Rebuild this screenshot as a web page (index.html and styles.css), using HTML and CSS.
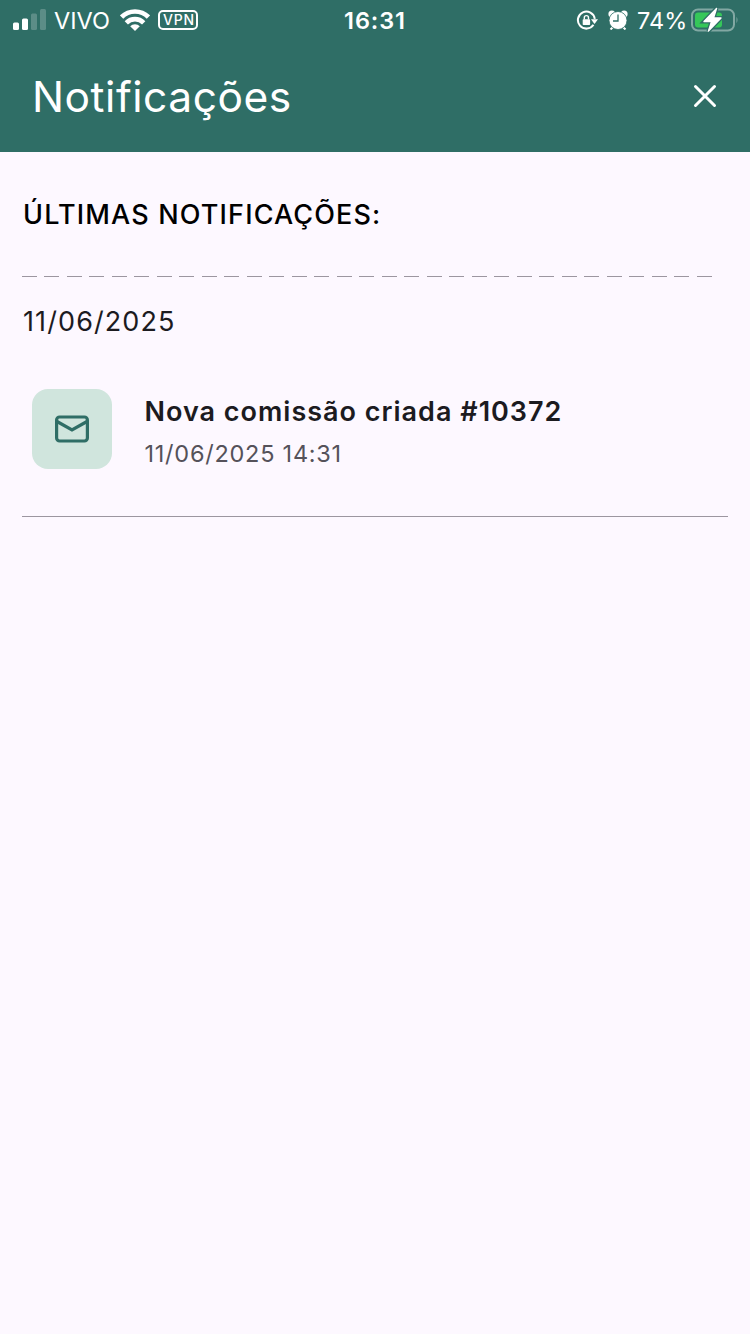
FILE: index.html
```html
<!DOCTYPE html>
<html lang="pt-BR">
<head>
    <meta charset="UTF-8">
    <title>Notificações</title>
    <link rel="stylesheet" href="styles.css">
</head>
<body>
    <header class="topo">
        <div class="status">
            <div class="status-esq">
                <svg class="sinal" width="33" height="22" viewBox="0 0 33 22">
                    <rect x="0" y="13.5" width="6" height="7.5" rx="1.5" fill="#fff"/>
                    <rect x="9" y="9.5" width="6" height="11.5" rx="1.5" fill="#fff"/>
                    <rect x="18" y="4.5" width="6" height="16.5" rx="1.5" fill="#fff" opacity=".22"/>
                    <rect x="27" y="0" width="6" height="21" rx="1.5" fill="#fff" opacity=".22"/>
                </svg>
                <span class="operadora">VIVO</span>
                <svg class="wifi" width="30" height="22" viewBox="0 0 30 22" fill="none" stroke="#fff" stroke-width="4.6">
                    <path d="M1.6 8a19 19 0 0 1 26.8 0"/>
                    <path d="M6.3 13.8a12.2 12.2 0 0 1 17.4 0"/>
                    <path d="M15 22l-4.8-4.7a6.7 6.7 0 0 1 9.6 0z" fill="#fff" stroke="none"/>
                </svg>
                <span class="vpn">VPN</span>
            </div>
            <div class="hora">16:31</div>
            <div class="status-dir">
                <svg class="trava" width="22" height="20" viewBox="0 0 22 20" fill="none" stroke="#fff">
                    <path d="M17.5 14.8a8.5 8.5 0 1 1 1.3-6" stroke-width="2"/>
                    <path d="M15 9.3h7l-3.5 4.7z" fill="#fff" stroke="none"/>
                    <rect x="6.7" y="9.2" width="7.4" height="5.8" rx=".8" fill="#fff" stroke="none"/>
                    <path d="M8.3 9.5V7.7a2.1 2.1 0 0 1 4.2 0v1.8" stroke-width="1.4"/>
                </svg>
                <svg class="alarme" width="20" height="20" viewBox="0 0 20 20">
                    <path d="M5 17l-2.5 2.5M15 17l2.5 2.5" stroke="#fff" stroke-width="2"/>
                    <circle cx="3.9" cy="3.9" r="3.5" fill="#fff"/>
                    <circle cx="16.1" cy="3.9" r="3.5" fill="#fff"/>
                    <circle cx="10" cy="10.5" r="9" fill="#fff" stroke="#2f6e66" stroke-width=".8"/>
                    <path d="M10 4.5V11H5" fill="none" stroke="#2f6e66" stroke-width="1.3"/>
                </svg>
                <span class="carga">74%</span>
                <svg class="bateria" width="48" height="26" viewBox="0 0 48 26">
                    <rect x="1" y="2.5" width="42" height="21" rx="6" fill="none" stroke="#82a8a3" stroke-width="2"/>
                    <rect x="4" y="5.5" width="27" height="15" rx="3" fill="#35c759"/>
                    <path d="M45.5 9.8q2 3.2 0 6.4z" fill="#82a8a3"/>
                    <path d="M25.5 1.5L13 14.6h7.5l-3.1 9.5L30 11h-7.5z" fill="#fff" stroke="#2f6e66" stroke-width="4" paint-order="stroke"/>
                    <path d="M25.5 1.5L13 14.6h7.5l-3.1 9.5L30 11h-7.5z" fill="#fff" stroke="#fff" stroke-width="1.4" stroke-linejoin="round"/>
                </svg>
            </div>
        </div>
        <div class="barra">
            <h1 class="titulo">Notificações</h1>
            <svg class="fechar" width="24" height="24" viewBox="0 0 24 24">
                <path d="M2.5 2.5l19 19M21.5 2.5l-19 19" stroke="#fff" stroke-width="3" stroke-linecap="round"/>
            </svg>
        </div>
    </header>

    <main class="conteudo">
        <h2 class="subtitulo">ÚLTIMAS NOTIFICAÇÕES:</h2>
        <div class="tracejado"></div>
        <p class="data">11/06/2025</p>
        <div class="item">
            <div class="icone">
                <svg width="36" height="28" viewBox="0 0 36 28" fill="none" stroke="#2f6e66" stroke-width="3.2">
                    <rect x="2.6" y="2" width="30.8" height="24" rx="3"/>
                    <path d="M3 6.500L18 15l15-8.500"/>
                </svg>
            </div>
            <div class="texto">
                <p class="nome">Nova comissão criada #10372</p>
                <p class="quando">11/06/2025 14:31</p>
            </div>
        </div>
    </main>
</body>
</html>
```

FILE: styles.css
```css
*{
    box-sizing: border-box;
    margin: 0;
    padding: 0;
}
body{
    background-color: #fdf8ff;
    font-family: Inter, "Liberation Sans", sans-serif;
    min-height: 1334px;
}
svg{
    display: block;
    flex-shrink: 0;
}
.topo{
    background-color: #2f6e66;
    color: #fff;
    height: 152px;
}
.status{
    display: flex;
    align-items: center;
    height: 40px;
    padding: 0 11px 0 13px;
}
.status-esq, .status-dir{
    display: flex;
    align-items: center;
    flex: 1 1 0;
}
.status-dir{
    justify-content: flex-end;
}
.operadora{
    font-size: 23.5px;
    line-height: 40px;
    margin-left: 8px;
    padding-top: 1px;
    width: 57px;
    white-space: nowrap;
}
.wifi{
    margin-left: 9px;
}
.vpn{
    border: 2px solid #fff;
    border-radius: 5px;
    font-size: 14px;
    font-weight: 500;
    letter-spacing: 0.8px;
    line-height: 16px;
    height: 20px;
    width: 40px;
    padding-left: 3px;
    margin-left: 8px;
}
.hora{
    font-size: 23.5px;
    font-weight: 600;
    letter-spacing: 0.9px;
    line-height: 40px;
    padding-top: 1px;
    margin-right: 2px;
}
.alarme{
    margin-left: 10px;
}
.carga{
    font-size: 23.5px;
    line-height: 40px;
    margin-left: 9px;
    padding-top: 1px;
    width: 49px;
    white-space: nowrap;
}
.bateria{
    margin-left: 5px;
}
.barra{
    display: flex;
    align-items: center;
    justify-content: space-between;
    height: 112px;
    padding: 0 33px 0 32px;
}
.titulo{
    font-size: 42.5px;
    font-weight: 400;
    letter-spacing: 0.55px;
    line-height: 112px;
    padding-top: 2px;
}
.conteudo{
    padding: 43px 22px 0 22px;
}
.subtitulo{
    color: #000;
    font-size: 27px;
    font-weight: 500;
    letter-spacing: 1.15px;
    line-height: 40px;
    padding-left: 1px;
}
.tracejado{
    height: 1px;
    margin-top: 41px;
    width: 691px;
    background: repeating-linear-gradient(to right, #9c96a0 0, #9c96a0 15px, transparent 15px, transparent 22.5px);
}
.data{
    color: #1c1b1f;
    font-size: 27px;
    letter-spacing: 1.1px;
    line-height: 40px;
    margin-top: 25px;
    padding-left: 1px;
}
.item{
    display: flex;
    border-bottom: 1px solid #9c96a0;
    height: 128px;
    margin-top: 47px;
    padding-left: 10px;
}
.icone{
    display: flex;
    align-items: center;
    justify-content: center;
    background-color: #d0e5dd;
    border-radius: 16px;
    height: 80px;
    width: 80px;
}
.texto{
    margin-left: 32.5px;
    padding-top: 1px;
}
.nome{
    color: #1c1b1f;
    font-size: 27px;
    font-weight: 600;
    letter-spacing: 1px;
    line-height: 44px;
}
.quando{
    color: #55525a;
    font-size: 23.5px;
    letter-spacing: 0.75px;
    line-height: 40px;
}
```
